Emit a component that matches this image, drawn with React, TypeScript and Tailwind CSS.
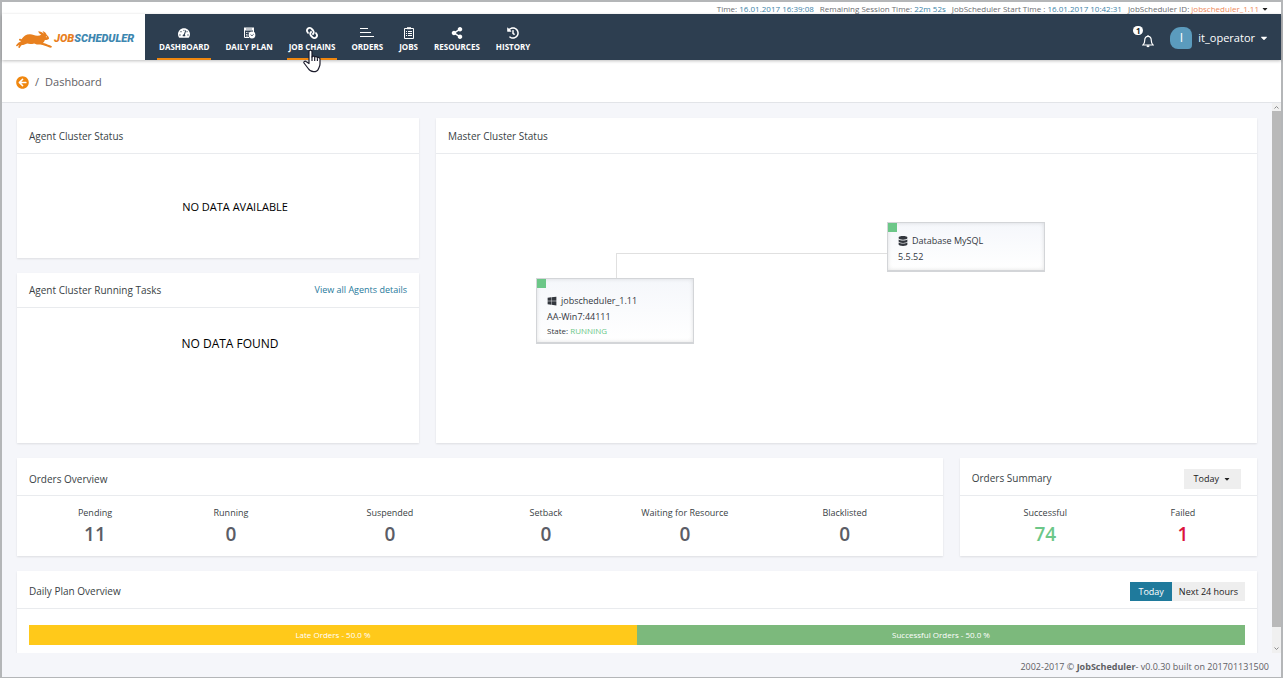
import type { ReactNode } from "react";
import {
  FaTachometerAlt,
  FaLink,
  FaShareAlt,
  FaHistory,
  FaArrowCircleLeft,
  FaWindows,
  FaDatabase,
  FaCaretDown,
} from "react-icons/fa";

function PlanIcon() {
  return (
    <svg viewBox="0 0 13 12" className="h-3 w-[13px]" fill="none">
      <path d="M1.500 1v9.500H6M10.500 1v4" stroke="#fff" strokeWidth="1" />
      <path d="M1 .5h10v3H1z" fill="#fff" />
      <path d="M3 2h6" stroke="#2d3e50" strokeWidth=".6" />
      <path d="M3 5.500h1.500M5.500 5.500h1M3 7.500h1.500M3 9h2" stroke="#fff" strokeWidth=".8" />
      <circle cx="9" cy="8" r="3.400" fill="#fff" />
      <path d="M7.500 7.600l1.500 1.200 1.700-1.600" stroke="#2d3e50" strokeWidth=".8" />
    </svg>
  );
}

function OrdersIcon() {
  return (
    <svg viewBox="0 0 14 12" className="h-3 w-3.5" stroke="#fff" strokeWidth="1">
      <path d="M0 1.500h8M0 5.500h11M0 9.500h14" />
    </svg>
  );
}

function JobsIcon() {
  return (
    <svg viewBox="0 0 12 12" className="size-3" fill="none" stroke="#fff">
      <path d="M1.500 1.500h9v10h-9z" />
      <path d="M4 1.200h4" strokeWidth="2" />
      <path d="M3 4.500h1M5 4.500h4M3 6.500h1M5 6.500h4M3 8.500h1M5 8.500h4" />
    </svg>
  );
}

function Rabbit() {
  return (
    <svg viewBox="0 0 36 17" className="h-[17px] w-9 shrink-0" fill="#e8801f">
      <path d="M5.500 8.200C7.500 5 10.500 3.100 14 3.200c2.800.1 4.500 1.300 7.300 1.500 1.400.1 2.800-.3 4-.9C23.500 3 22.600 1.600 22.200.3c2.200.1 4.300 1 5.600 2.400L26.600 0c2.200.8 3.600 2.200 4.200 3.900 1.300.8 2.100 2 2.300 3.500-.8 1.100-2.400 1.600-4.200 1.600-.4 1.200-1.100 2.200-2 2.900 2 .2 4.200 1.100 6.100 2.200 1.300.3 2.400.8 3 1.700-.5.8-1.400 1-2.500.7-3.200-1-6.100-2.400-9.300-2.900-2.100.1-4.200-.3-6-1.200-2.100.6-4.700.7-7 .2-1.700.9-3.600 1.500-5.400 1.500-.9.800-1.500 1.700-2 2.600-.7.500-1.700.2-1.600-.7.300-.7.700-1.300 1.100-1.900-.9.100-1.600.6-2.100 1.200-.7.200-1.300-.2-1.100-1C1.500 12.400 3.200 11.200 5 10.600c-.3-.2-.5-.5-.5-.8-1.200 0-1.800-.9-1.300-1.700.8-.7 1.700-.5 2.300.1z" />
      <circle cx="30.300" cy="5.800" r=".5" fill="#fff" />
    </svg>
  );
}

function Bell() {
  return (
    <svg viewBox="0 0 12 14" className="h-3.5 w-3" fill="none" stroke="#fff" strokeWidth="1.200">
      <path d="M6 1v1M1 11c1.500-1.400 1.700-2.500 1.700-4.500C2.700 4 4 2.300 6 2.300S9.300 4 9.300 6.500c0 2 .2 3.100 1.700 4.500z" />
      <path d="M4.700 12.200h2.600" strokeWidth="1.800" />
    </svg>
  );
}

function Pointer() {
  return (
    <svg
      viewBox="0 0 18 24"
      className="pointer-events-none absolute top-[35px] left-4 z-10 h-6 w-[18px]"
      fill="#fff"
      stroke="#1b1b2b"
      strokeWidth="1.200"
      strokeLinejoin="round"
    >
      <path d="M6 14.500V2.800C6 .6 9 .6 9 2.800V8c.3-1.300 2.600-1.200 2.700.3.500-1 2.500-.8 2.700.6.700-.8 2.600-.5 2.600 1.200v5c0 2-1 3.200-1.500 4.600-.7 2-2.300 3-5 3-2.800 0-4.200-1.400-5.300-3.200L1 14c-.6-1.300.9-2.400 2-1.500z" />
      <path d="M9 7.500V12M11.700 8.500V12M14.400 9.200V12" fill="none" />
    </svg>
  );
}

type NavEntry = { label: string; icon: ReactNode; marked?: boolean; hovered?: boolean };

const nav: NavEntry[] = [
  { label: "DASHBOARD", icon: <FaTachometerAlt />, marked: true },
  { label: "DAILY PLAN", icon: <PlanIcon /> },
  { label: "JOB CHAINS", icon: <FaLink className="-scale-x-100" />, marked: true, hovered: true },
  { label: "ORDERS", icon: <OrdersIcon /> },
  { label: "JOBS", icon: <JobsIcon /> },
  { label: "RESOURCES", icon: <FaShareAlt /> },
  { label: "HISTORY", icon: <FaHistory /> },
];

function Card({
  title,
  action,
  className = "",
  head = "h-9 pt-0.5",
  children,
}: {
  title: string;
  action?: ReactNode;
  className?: string;
  head?: string;
  children: ReactNode;
}) {
  return (
    <section className={`flex flex-col bg-white shadow-[0_1px_2px_rgba(0,0,0,0.1)] ${className}`}>
      <header
        className={`flex shrink-0 items-center justify-between border-b border-[#e9ebee] px-3 ${head}`}
      >
        <h2 className="text-[10px] text-[#3a3f45]">{title}</h2>
        {action}
      </header>
      {children}
    </section>
  );
}

function Stat({ label, value, color = "text-[#5b5d66]" }: { label: string; value: number; color?: string }) {
  return (
    <div className="text-center">
      <dt className="text-[9px] leading-3 text-[#3a3f45]">{label}</dt>
      <dd className={`mt-[3px] text-[19px] leading-6 font-semibold ${color}`}>{value}</dd>
    </div>
  );
}

function Info({ label, value }: { label: string; value: string }) {
  return (
    <span>
      {label} <span className="text-[#3c84a8]">{value}</span>
    </span>
  );
}

const nodeBox =
  "absolute w-[158px] border border-b-2 border-[#d3d5d8] bg-linear-to-b from-[#f5f7fb] to-white px-2.5 text-[#33373e] shadow-[inset_0_0_4px_rgba(0,0,0,0.12)]";

export default function App() {
  return (
    <div className="flex h-screen flex-col border-x-2 border-t-2 border-b border-[#b4b6b8] bg-[#f5f6fa] font-['Open_Sans','Noto_Sans',sans-serif] text-[9px]">
      <div className="flex h-3 shrink-0 items-center justify-end gap-1.5 bg-white pt-0.5 pr-3 text-[8px] whitespace-nowrap text-[#6b6d70]">
        <Info label="Time:" value="16.01.2017 16:39:08" />
        <Info label="Remaining Session Time:" value="22m 52s" />
        <Info label="JobScheduler Start Time :" value="16.01.2017 10:42:31" />
        <button className="flex items-center gap-0.5">
          <span>
            JobScheduler ID: <span className="text-[#ee8a5c]">jobscheduler_1.11</span>
          </span>
          <FaCaretDown className="size-2 text-[#222]" />
        </button>
      </div>

      <header className="z-10 flex h-[46px] shrink-0 bg-[#2d3e50] shadow-[0_1px_3px_rgba(0,0,0,0.25)]">
        <a href="#home" className="flex w-[143px] items-center gap-0.5 bg-white pt-1 pl-3.5" aria-label="JobScheduler home">
          <Rabbit />
          <span className="font-['Roboto',sans-serif] text-[11px] font-black text-[#3d87b0] italic">
            <span className="text-[#e8801f]">JOB</span>SCHEDULER
          </span>
        </a>
        <nav className="ml-3 flex gap-3">
          {nav.map((item) => (
            <a
              key={item.label}
              href="#nav"
              className={`relative flex flex-col items-center border-b-2 px-0.5 pt-3 text-white ${
                item.marked ? "border-[#f0870f]" : "border-transparent"
              }`}
            >
              <span className="flex h-3.5 items-center text-[12px]">{item.icon}</span>
              <span className="mt-px text-[8px] leading-3 font-bold">{item.label}</span>
              {item.hovered && <Pointer />}
            </a>
          ))}
        </nav>
        <div className="ml-auto flex items-center gap-4 pt-0.5 pr-3 text-white">
          <button className="relative flex size-5 items-end justify-end" aria-label="Notifications">
            <Bell />
            <span className="absolute -top-0.5 -left-px flex h-[9px] w-2.5 items-center justify-center rounded-full bg-white text-[8px] leading-none font-bold text-[#222]">
              1
            </span>
          </button>
          <button className="flex items-center">
            <span className="mr-1.5 flex size-[22px] items-center justify-center rounded-tl-[11px] rounded-tr-[8px] rounded-br-[4px] rounded-bl-[8px] bg-[#5b9bbd] text-[12px]">
              I
            </span>
            <span className="mr-1 text-[11px]">it_operator</span>
            <FaCaretDown className="size-2.5" />
          </button>
        </div>
      </header>

      <div className="flex h-[43px] shrink-0 items-center gap-1.5 border-b border-[#e2e4e8] bg-white pt-0.5 pl-3.5 text-[11px] text-[#5f6064]">
        <a href="#back" aria-label="Back">
          <FaArrowCircleLeft className="size-[13px] text-[#f0870f]" />
        </a>
        <span>/</span>
        <span className="font-medium">Dashboard</span>
      </div>

      <div className="flex min-h-0 flex-1">
        <main className="grid min-w-0 flex-1 grid-cols-12 content-start gap-x-[17px] gap-y-[15px] overflow-hidden px-[15px] pt-[15px]">
          <div className="col-span-4 flex flex-col gap-[15px]">
            <Card title="Agent Cluster Status" className="h-[140px]">
              <div className="flex flex-1 items-center justify-center pt-0.5 pl-[34px] text-[11px] text-black">
                NO DATA AVAILABLE
              </div>
            </Card>
            <Card
              title="Agent Cluster Running Tasks"
              head="h-[35px]"
              className="h-[170px]"
              action={
                <a href="#agents" className="text-[9px] text-[#1f7a9c]">
                  View all Agents details
                </a>
              }
            >
              <div className="pt-[27px] pr-4 pl-10 text-center text-[12px] text-black">NO DATA FOUND</div>
            </Card>
          </div>

          <Card title="Master Cluster Status" className="col-span-8">
            <div className="relative flex-1">
              <div className="absolute top-[99px] left-[180px] h-[25px] w-[271px] border-t border-l border-[#e0e0e0]" />
              <div className={`${nodeBox} top-[124px] left-[100px] h-[66px] pt-3.5`}>
                <span className="absolute top-0 left-0 size-[9px] bg-[#6cc788]" />
                <div className="flex items-center gap-1 text-[9px] leading-4">
                  <FaWindows className="size-2.5" /> jobscheduler_1.11
                </div>
                <div className="text-[9px] leading-4">AA-Win7:44111</div>
                <div className="text-[8px] leading-3">
                  State: <span className="text-[#6cc788]">RUNNING</span>
                </div>
              </div>
              <div className={`${nodeBox} top-[68px] left-[451px] h-[50px] pt-2.5`}>
                <span className="absolute top-0 left-0 size-[9px] bg-[#6cc788]" />
                <div className="flex items-center gap-1 text-[9px] leading-4">
                  <FaDatabase className="size-2.5" /> Database MySQL
                </div>
                <div className="text-[9px] leading-4">5.5.52</div>
              </div>
            </div>
          </Card>

          <Card title="Orders Overview" head="h-[38px] pt-1.5" className="col-span-9 h-[98px]">
            <dl className="grid grid-cols-[132fr_140fr_178fr_134fr_144fr_176fr] pt-[11px] pr-2.5 pl-3">
              <Stat label="Pending" value={11} />
              <Stat label="Running" value={0} />
              <Stat label="Suspended" value={0} />
              <Stat label="Setback" value={0} />
              <Stat label="Waiting for Resource" value={0} />
              <Stat label="Blacklisted" value={0} />
            </dl>
          </Card>
          <Card
            title="Orders Summary"
            head="h-[38px] pt-1"
            className="col-span-3 h-[98px]"
            action={
              <button className="mr-1 flex h-5 items-center gap-1 bg-[#eeeeee] px-2.5 text-[9px] text-[#222]">
                Today <FaCaretDown className="size-2" />
              </button>
            }
          >
            <dl className="grid grid-cols-[147fr_128fr] pt-[11px] pr-2.5 pl-3">
              <Stat label="Successful" value={74} color="text-[#6cc788]" />
              <Stat label="Failed" value={1} color="text-[#dc143c]" />
            </dl>
          </Card>

          <Card
            title="Daily Plan Overview"
            head="h-[38px] pt-1"
            className="col-span-12 h-[98px]"
            action={
              <div className="flex text-[9px]">
                <button className="h-[19px] bg-[#1f7a9c] px-2 text-white">Today</button>
                <button className="h-[19px] bg-[#eeeeee] px-[7px] text-[#222]">Next 24 hours</button>
              </div>
            }
          >
            <div className="mx-3 mt-4 flex h-5 text-[8px] text-white">
              <div className="flex w-1/2 items-center justify-center bg-[#ffc91a]">Late Orders - 50.0 %</div>
              <div className="flex w-1/2 items-center justify-center bg-[#7cb97c]">Successful Orders - 50.0 %</div>
            </div>
          </Card>
        </main>
        <div className="flex w-[9px] shrink-0 flex-col bg-[#f0f0f0] text-[#8a8a8a]" aria-hidden="true">
          <svg viewBox="0 0 9 8" className="h-2" fill="none" stroke="currentColor">
            <path d="M2.500 5.500l2-2 2 2" />
          </svg>
          <div className="flex-1 bg-[#b9b9b9]" />
          <svg viewBox="0 0 9 26" className="h-[26px]" fill="none" stroke="currentColor">
            <path d="M2.500 20.500l2 2 2-2" />
          </svg>
        </div>
      </div>

      <footer className="flex h-6 shrink-0 items-center justify-end pt-1 pr-3 text-[9px] text-[#5f6064]">
        <span>
          2002-2017 © <b>JobScheduler</b>- v0.0.30 built on 201701131500
        </span>
      </footer>
    </div>
  );
}
